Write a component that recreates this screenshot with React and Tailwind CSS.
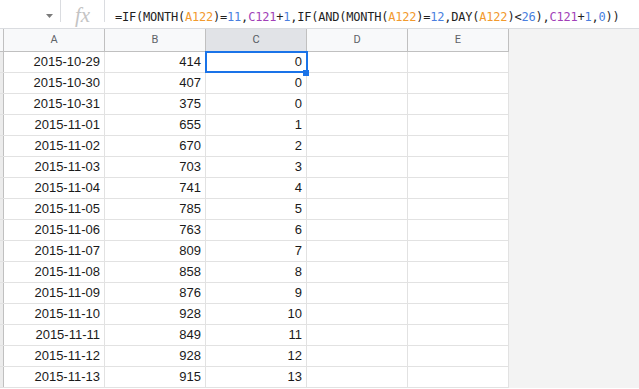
import React from "react";

const rows = [
  ["2015-10-29", 414, 0],
  ["2015-10-30", 407, 0],
  ["2015-10-31", 375, 0],
  ["2015-11-01", 655, 1],
  ["2015-11-02", 670, 2],
  ["2015-11-03", 703, 3],
  ["2015-11-04", 741, 4],
  ["2015-11-05", 785, 5],
  ["2015-11-06", 763, 6],
  ["2015-11-07", 809, 7],
  ["2015-11-08", 858, 8],
  ["2015-11-09", 876, 9],
  ["2015-11-10", 928, 10],
  ["2015-11-11", 849, 11],
  ["2015-11-12", 928, 12],
  ["2015-11-13", 915, 13],
];

const O = ({ children }) => <span className="text-[#f29a2e]">{children}</span>;
const N = ({ children }) => <span className="text-[#4a7fe0]">{children}</span>;
const P = ({ children }) => <span className="text-[#a23fb8]">{children}</span>;

export default function App() {
  const cols = ["A", "B", "C", "D", "E"];
  return (
    <div className="w-[639px] h-[389px] overflow-hidden bg-white" style={{ fontFamily: '"Liberation Sans", Arial, sans-serif' }}>
      {/* formula bar */}
      <div className="h-[29px] flex items-start border-b border-[#dadce0] bg-white">
        <div className="w-[60px] h-[29px] flex items-center justify-end pr-[7px] pt-[3px]">
          <svg width="7" height="4" viewBox="0 0 7 4"><path d="M0 0h7L3.5 4z" fill="#7b7b7b" /></svg>
        </div>
        <div className="w-px h-[22px] bg-[#dadce0]" />
        <div className="w-[43px] h-[29px] flex items-center justify-center pt-[2px]">
          <span className="italic text-[21px] leading-none text-[#c4c4c4]" style={{ fontFamily: '"Liberation Serif", serif' }}>fx</span>
        </div>
        <div className="w-px h-[22px] bg-[#dadce0]" />
        <div className="h-[29px] flex items-center pl-[10px] pt-[4px] text-[12px] tracking-[-0.22px] text-[#1f1f1f] whitespace-nowrap" style={{ fontFamily: '"DejaVu Sans Mono", monospace' }}>
          =IF(MONTH(<O>A122</O>)=<N>11</N>,<P>C121</P>+<N>1</N>,IF(AND(MONTH(<O>A122</O>)=<N>12</N>,DAY(<O>A122</O>)&lt;<N>26</N>),<P>C121</P>+<N>1</N>,<N>0</N>))
        </div>
      </div>

      <div className="flex bg-[#f3f3f3]">
        <div className="flex flex-col">
          {/* header row */}
          <div className="flex h-[23px] border-b border-[#c0c0c0]">
            <div className="w-[4px] bg-[#f8f9fa] border-r border-[#c0c0c0]" />
            {cols.map((c) => (
              <div
                key={c}
                className={`w-[101px] border-r border-[#c0c0c0] flex items-center justify-center text-[11px] ${c === "C" ? "bg-[#e1e3e7] text-[#555a63]" : "bg-[#f8f9fa] text-[#5f6368]"}`}
                style={{ fontFamily: '"Roboto", "Liberation Sans", sans-serif' }}
              >
                {c}
              </div>
            ))}
          </div>
          {rows.map((r, i) => (
            <div key={i} className="flex h-[21px] border-b border-[#e2e2e2] bg-white">
              <div className="w-[4px] bg-[#ececec] border-r border-[#c0c0c0]" />
              <div className="w-[101px] border-r border-[#e2e2e2] flex items-center justify-end pr-[4px] text-[13px] text-[#1a1a1a]">{r[0]}</div>
              <div className="w-[101px] border-r border-[#e2e2e2] flex items-center justify-end pr-[4px] text-[13px] text-[#1a1a1a]">{r[1]}</div>
              <div className="relative w-[101px] border-r border-[#e2e2e2] flex items-center justify-end pr-[4px] text-[13px] text-[#1a1a1a]">
                {r[2]}
                {i === 0 && (
                  <>
                    <div className="absolute z-10 -left-[1px] -top-[1px] w-[103px] h-[22px] border-2 border-[#1a73e8]" />
                    <div className="absolute z-20 -right-[3px] -bottom-[4px] w-[6px] h-[6px] bg-[#1a73e8]" />
                  </>
                )}
              </div>
              <div className="w-[101px] border-r border-[#e2e2e2]" />
              <div className="w-[101px] border-r border-[#e2e2e2]" />
            </div>
          ))}
        </div>
        <div className="flex-1" />
      </div>
    </div>
  );
}
